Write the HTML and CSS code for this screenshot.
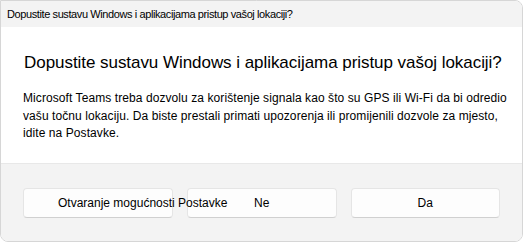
FILE: index.html
```html
<!DOCTYPE html>
<html lang="hr">
<head>
<meta charset="utf-8">
<title>Lokacija</title>
<link rel="stylesheet" href="styles.css">
</head>
<body>
<div class="window">
  <div class="titlebar">Dopustite sustavu Windows i aplikacijama pristup vašoj lokaciji?</div>
  <div class="content">
    <h1 class="heading">Dopustite sustavu Windows i aplikacijama pristup vašoj lokaciji?</h1>
    <p class="body-text">Microsoft Teams treba dozvolu za korištenje signala kao što su GPS ili Wi-Fi da bi odredio<br>vašu točnu lokaciju. Da biste prestali primati upozorenja ili promijenili dozvole za mjesto,<br>idite na Postavke.</p>
  </div>
  <div class="footer">
    <button class="btn btn-wide">Otvaranje mogućnosti Postavke</button>
    <button class="btn">Ne</button>
    <button class="btn">Da</button>
  </div>
</div>
</body>
</html>
```
FILE: styles.css
```css
html, body {
  margin: 0;
  padding: 0;
  background: #ffffff;
}
body {
  font-family: "Liberation Sans", Arial, sans-serif;
  color: #000;
}
.window {
  box-sizing: border-box;
  width: 523px;
  height: 242px;
  border: 1px solid #d6d6d6;
  border-radius: 0 8px 8px 8px;
  overflow: hidden;
  display: flex;
  flex-direction: column;
}
.titlebar {
  height: 26px;
  flex: none;
  background: #f3f3f3;
  font-size: 11px;
  letter-spacing: -0.4px;
  line-height: 27px;
  padding-left: 6px;
}
.content {
  flex: none;
  height: 137px;
  background: #ffffff;
  padding: 0 22px;
  box-sizing: border-box;
  border-bottom: 1px solid #e8e8e8;
}
.heading {
  margin: 24px 0 0 1px;
  font-size: 17px;
  letter-spacing: -0.05px;
  font-weight: 400;
  line-height: 24px;
  white-space: nowrap;
}
.body-text {
  margin: 15px 0 0 0;
  font-size: 12px;
  letter-spacing: 0.08px;
  line-height: 17.5px;
  white-space: nowrap;
}
.footer {
  flex: 1;
  background: #f3f3f3;
  display: flex;
  gap: 14px;
  padding: 24px 22px 0 22px;
}
.btn {
  width: 150px;
  height: 30px;
  box-sizing: border-box;
  background: #fdfdfd;
  border: 1px solid #e5e5e5;
  border-bottom-color: #d0d0d0;
  border-radius: 4px;
  font-family: inherit;
  font-size: 12px;
  color: #000;
  padding: 0;
  white-space: nowrap;
  text-align: center;
  line-height: 28px;
  overflow: visible;
}
.btn-wide {
  padding: 0 34px;
  text-align: left;
  position: relative;
  z-index: 1;
}
```
